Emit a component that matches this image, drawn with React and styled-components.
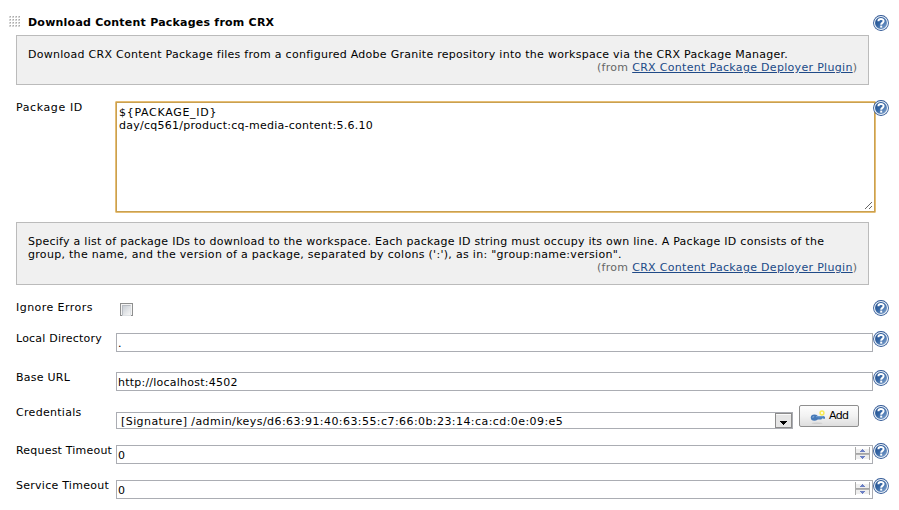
import React from "react";
import styled, { createGlobalStyle } from "styled-components";

const Global = createGlobalStyle`
  * { box-sizing: border-box; }
  body { margin: 0; background: #fff; color: #000; font: 11px/13px "DejaVu Sans", Verdana, sans-serif; overflow: hidden; }
  svg { display: block; flex: none; }
`;

const Page = styled.main`
  width: 899px;
  height: 510px;
  padding: 15px 0 0 9px;
`;
const Header = styled.header`
  display: grid;
  grid-template-columns: 19px 845px 16px;
  height: 20px;
`;
const Title = styled.h1`
  margin: 1px 0 0;
  font-size: 11px;
  line-height: 13px;
  font-weight: bold;
  white-space: nowrap;
`;
const Grip = styled.svg`
  margin-top: 1px;
`;
const Text = styled.span`
  letter-spacing: ${(p) => p.$track || 0}px;
  white-space: pre;
`;
const HelpBox = styled.section`
  width: 853px;
  height: ${(p) => p.$h}px;
  margin: 0 0 15px 7px;
  padding: 12px 11px 0;
  border: 1px solid #bbb;
  background: #f0f0f0;
`;
const Line = styled.div`
  height: 13px;
  white-space: nowrap;
`;
const Source = styled(Line)`
  text-align: right;
  color: #666;
`;
const Link = styled.a`
  color: #204a87;
  text-decoration: underline;
`;
const Row = styled.div`
  display: grid;
  grid-template-columns: 100px 757px 16px;
  align-items: start;
  height: ${(p) => p.$h}px;
  margin-left: 7px;
`;
const Label = styled.label`
  padding-top: 1px;
  white-space: nowrap;
`;
const Area = styled.div`
  width: 761px;
  height: 112px;
  margin: 1px 0 0 -1px;
  padding: 4px 3px;
  border: 1px solid #e5bd74;
  border-radius: 1px;
  box-shadow: inset 0 0 0 1px #c9a050;
  background: #fff;
  display: grid;
  grid-template-rows: 13px 13px 1fr;
`;
const Resize = styled.svg`
  align-self: end;
  justify-self: end;
  margin: 0 -1px -2px 0;
`;
const Input = styled.div`
  height: 19px;
  margin-top: 2px;
  padding: 3px 2px 0 1px;
  border: 1px solid #abadb3;
  display: flex;
  justify-content: space-between;
`;
const Spinner = styled.svg`
  margin-top: -2px;
`;
const Check = styled.div`
  width: 13px;
  height: 13px;
  margin: 3px 0 0 4px;
  border: 1px solid #8e8f8f;
  padding: 1px;
  background: #f4f4f4;
  &::before {
    content: "";
    display: block;
    height: 9px;
    border: 1px solid #b8bcc2;
    border-right-color: #dfe2e5;
    border-bottom-color: #dfe2e5;
    background: linear-gradient(135deg, #c9ced5, #f6f6f6);
  }
`;
const Controls = styled.div`
  display: flex;
  align-items: start;
`;
const Select = styled.div`
  width: 677px;
  height: 17px;
  margin: 7px 6px 0 0;
  padding: 2px 0 0 4px;
  border: 1px solid #abadb3;
  display: flex;
  justify-content: space-between;
`;
const Arrow = styled.svg`
  margin-top: -2px;
`;
const Button = styled.button`
  width: 60px;
  height: 22px;
  padding: 0 0 1px 10px;
  border: 1px solid #8f8f8f;
  border-radius: 2px;
  background: linear-gradient(#fdfdfd, #f2f2f2 50%, #dedede);
  color: #000;
  font: inherit;
  display: flex;
  align-items: center;
  gap: 3px;
`;

const HelpIcon = () => (
  <svg width="16" height="16" viewBox="0 0 16 16">
    <defs>
      <linearGradient id="blue" x1="0" y1="0" x2="1" y2="1">
        <stop offset="0" stopColor="#204a87" />
        <stop offset=".45" stopColor="#3465a4" />
        <stop offset="1" stopColor="#8eaed6" />
      </linearGradient>
    </defs>
    <circle cx="8" cy="8" r="7.9" fill="#2f5795" />
    <circle cx="8" cy="8" r="6.5" fill="url(#blue)" stroke="#edf2f8" strokeWidth="1.1" />
    <path d="M5.4 6.2C5.4 3.3 10.6 3.3 10.6 6.1C10.6 7.8 8.2 7.9 8.2 9.7" fill="none" stroke="#fff" strokeWidth="2" />
    <rect x="7.2" y="10.6" width="2" height="2" fill="#fff" />
  </svg>
);

const dots = [0, 1, 2, 3];
const GripIcon = () => (
  <Grip width="12" height="12" shapeRendering="crispEdges">
    {dots.map((r) => dots.map((c) => (
      <g key={`${r}${c}`}>
        <rect x={c * 3} y={r * 3} width="2" height="2" fill="#d6d6d6" />
        <rect x={c * 3 + 1} y={r * 3} width="1" height="1" fill="#aaa" />
      </g>
    )))}
  </Grip>
);

const KeyIcon = () => (
  <svg width="16" height="16" viewBox="0 0 16 16">
    <ellipse cx="7" cy="15.2" rx="5.5" ry=".8" fill="#c4c4c4" opacity=".7" />
    <circle cx="12" cy="5" r="1.9" fill="#fffde4" stroke="#f7ea58" strokeWidth="1.5" />
    <path d="M6 7.9H13.8L15 9V10.8H13.5L12.5 10.2L11.2 11.4H6Z" fill="#4b7fbd" />
    <ellipse cx="4.4" cy="9.6" rx="3.6" ry="3.2" fill="#4679b8" />
    <path d="M6 8.7H13.5" stroke="#83acd9" strokeWidth=".8" />
    <path d="M2.4 9.2L4.2 8.7" stroke="#9dbce0" />
  </svg>
);

const Spin = () => (
  <Spinner width="15" height="14" viewBox="0 0 15 14" shapeRendering="crispEdges">
    <rect x="1" y="2" width="13" height="10" fill="#eeeeee" />
    <path d="M.5 0V13M14.5 0V13" stroke="#aaa" />
    <path d="M1 6.5H14" stroke="#a6a6a6" />
    <path d="M1 7.5H14" stroke="#b4b4b4" />
    <path d="M7 2H8V3H9V4H10V5H5V4H6V3H7ZM5 9H10V10H9V11H8V12H7V11H6V10H5Z" fill="#6c80c4" />
  </Spinner>
);

const SourceLine = () => (
  <Source>
    <Text $track={0.31}>(from <Link>CRX Content Package Deployer Plugin</Link></Text>
    <Text>)</Text>
  </Source>
);

const Field = ({ label, height, track, children }) => (
  <Row $h={height}>
    <Label><Text $track={track}>{label}</Text></Label>
    {children}
    <HelpIcon />
  </Row>
);

export default function App() {
  return (
    <>
      <Global />
      <Page>
        <Header>
          <GripIcon />
          <Title><Text $track={0.23}>Download Content Packages from CRX</Text></Title>
          <HelpIcon />
        </Header>
        <HelpBox $h={50}>
          <Line><Text $track={0.272}>Download CRX Content Package files from a configured Adobe Granite repository into the workspace via the CRX Package Manager.</Text></Line>
          <SourceLine />
        </HelpBox>
        <Field label="Package ID" height={122} track={0.6}>
          <Area>
            <Text $track={0.7}>{"${PACKAGE_ID}"}</Text>
            <Text $track={0.25}>day/cq561/product:cq-media-content:5.6.10</Text>
            <Resize width="9" height="9"><path d="M1 8L8 1M5 8L8 5" stroke="#666" /></Resize>
          </Area>
        </Field>
        <HelpBox $h={63}>
          <Line><Text $track={0.257}>Specify a list of package IDs to download to the workspace. Each package ID string must occupy its own line. A Package ID consists of the</Text></Line>
          <Line><Text $track={0.295}>group, the name, and the version of a package, separated by colons (':'), as in: "group:name:version".</Text></Line>
          <SourceLine />
        </HelpBox>
        <Field label="Ignore Errors" height={31} track={0.45}><Check /></Field>
        <Field label="Local Directory" height={39} track={0.22}><Input><Text>{"."}</Text></Input></Field>
        <Field label="Base URL" height={35} track={0.25}><Input><Text $track={0.23}>http://localhost:4502</Text></Input></Field>
        <Field label="Credentials" height={38} track={0.3}>
          <Controls>
            <Select>
              <Text $track={0.43}>[Signature] /admin/keys/d6:63:91:40:63:55:c7:66:0b:23:14:ca:cd:0e:09:e5</Text>
              <Arrow width="17" height="15" shapeRendering="crispEdges">
                <rect x=".5" y=".5" width="16" height="14" fill="#e6e6e6" stroke="#8c8c8c" />
                <path d="M1 1.5H16" stroke="#fafafa" />
                <path d="M5 8H12V9H11V10H10V11H9V12H8V11H7V10H6V9H5Z" fill="#000" />
              </Arrow>
            </Select>
            <Button><KeyIcon /><Text $track={-0.6}>Add</Text></Button>
          </Controls>
        </Field>
        <Field label="Request Timeout" height={35} track={0.2}><Input><Text>0</Text><Spin /></Input></Field>
        <Field label="Service Timeout" height={32} track={0.26}><Input><Text>0</Text><Spin /></Input></Field>
      </Page>
    </>
  );
}
